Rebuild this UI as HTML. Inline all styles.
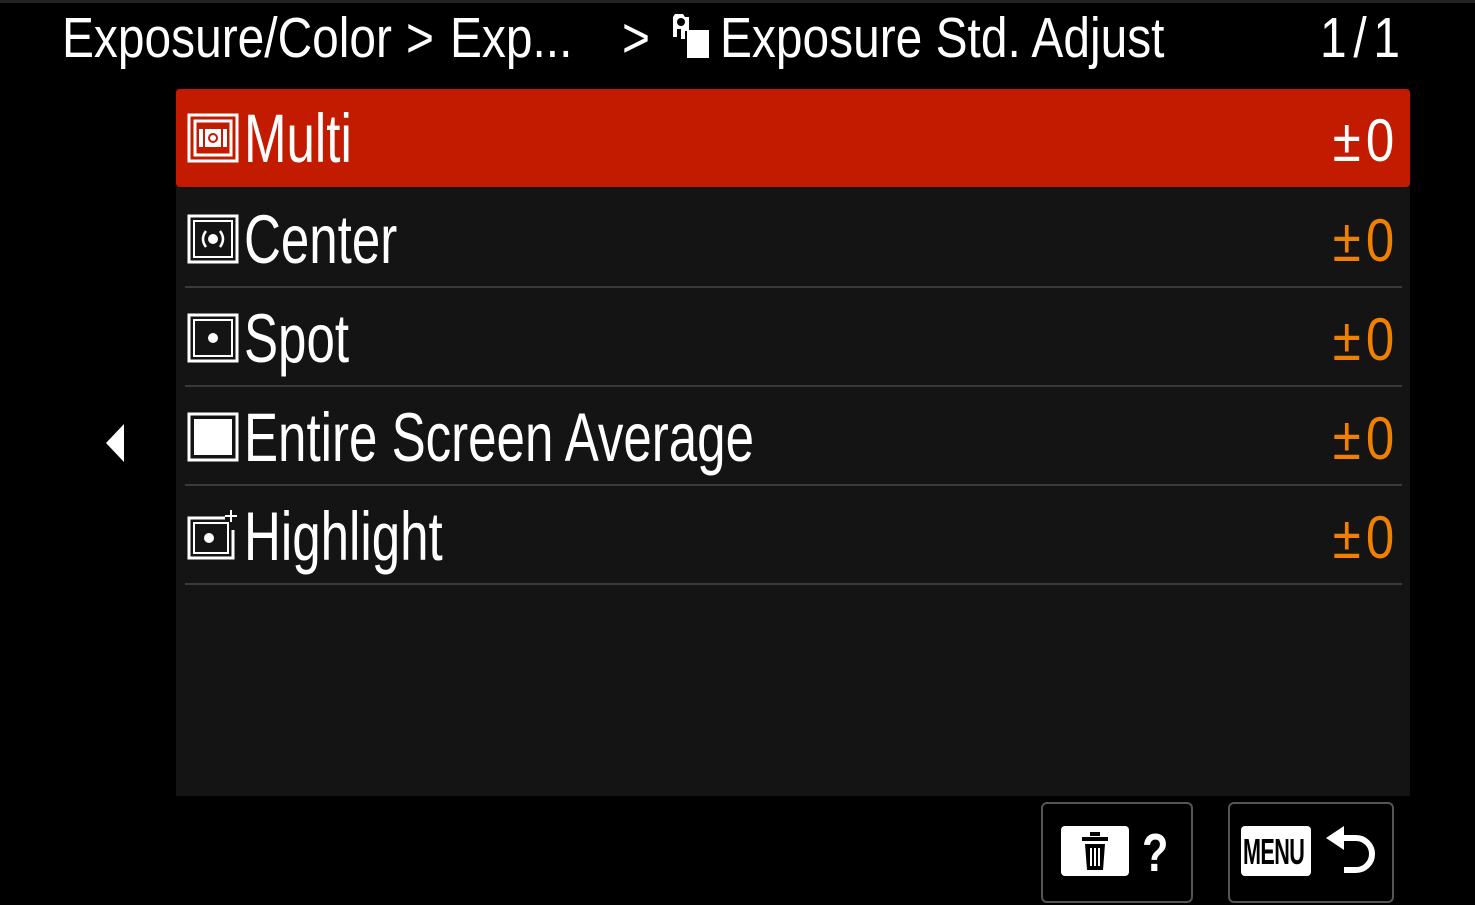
<!DOCTYPE html>
<html><head><meta charset="utf-8"><style>
body{margin:0;width:1475px;height:905px;background:#000;overflow:hidden;font-family:"Liberation Sans",sans-serif;color:#fff;position:relative}
.t{position:absolute;white-space:nowrap;transform-origin:0 0;line-height:1}
.h{font-size:57px;transform:scaleX(0.84)}
.r{font-size:69px;transform:scaleX(0.74)}
.v{position:absolute;right:76px;font-size:60px;color:#f08000;line-height:1;transform-origin:100% 0;transform:scaleX(0.85);letter-spacing:6px}
.sep{position:absolute;left:185px;width:1217px;height:2px;background:#3a3a3a}
.ic{position:absolute;left:187px}
</style></head><body>
<div style="position:absolute;left:0;top:0;width:1475px;height:3px;background:#222"></div>
<div class="t h" style="left:62px;top:10px">Exposure/Color</div>
<div class="t h" style="left:406px;top:10px">&gt;</div>
<div class="t h" style="left:450px;top:10px">Exp...</div>
<div class="t h" style="left:622px;top:10px">&gt;</div>
<svg style="position:absolute;left:669px;top:10px" width="44" height="50" viewBox="0 0 44 50"><path d="M6 4h8l2 3h4v14h-4v8h-4V19h-4v8H4V7z" fill="#fff"/><circle cx="12" cy="12" r="4" fill="#000"/><rect x="18" y="20" width="22" height="28" fill="#fff"/></svg>
<div class="t h" style="left:720px;top:10px">Exposure Std. Adjust</div>
<div class="t h" style="left:1320px;top:10px;letter-spacing:8px">1/1</div>
<div style="position:absolute;left:176px;top:89px;width:1234px;height:707px;background:#141414"></div>
<div style="position:absolute;left:176px;top:89px;width:1234px;height:98px;background:#c21b00;border-radius:4px"></div>
<div class="sep" style="top:286px"></div><div class="sep" style="top:385px"></div><div class="sep" style="top:484px"></div><div class="sep" style="top:583px"></div>
<svg class="ic" style="top:113px" width="52" height="50" viewBox="0 0 52 50"><rect x="2" y="2" width="48" height="46" fill="none" stroke="#fff" stroke-width="3"/><path d="M8 8h36v34H8z" fill="none" stroke="#fff" stroke-width="3"/><rect x="12" y="12" width="28" height="26" fill="#c21b00"/><path d="M12 16h4v18h-4M40 16h-4v18h4" fill="#fff"/><rect x="18" y="16" width="16" height="18" fill="#fff"/><circle cx="26" cy="25" r="5" fill="#c21b00"/><circle cx="26" cy="25" r="3" fill="#fff"/></svg>
<svg class="ic" style="top:214px" width="52" height="50" viewBox="0 0 52 50"><rect x="2" y="2" width="48" height="46" fill="none" stroke="#fff" stroke-width="3"/><rect x="7" y="7" width="38" height="36" fill="none" stroke="#fff" stroke-width="2"/><circle cx="26" cy="25" r="5" fill="#fff"/><path d="M19 17q-6 8 0 16M33 17q6 8 0 16" stroke="#fff" stroke-width="2.5" fill="none"/></svg>
<svg class="ic" style="top:313px" width="52" height="50" viewBox="0 0 52 50"><rect x="2" y="2" width="48" height="46" fill="none" stroke="#fff" stroke-width="3"/><rect x="7" y="7" width="38" height="36" fill="none" stroke="#fff" stroke-width="2"/><circle cx="26" cy="25" r="5" fill="#fff"/></svg>
<svg class="ic" style="top:412px" width="52" height="50" viewBox="0 0 52 50"><rect x="2" y="2" width="48" height="46" fill="none" stroke="#fff" stroke-width="3"/><rect x="7" y="7" width="38" height="36" fill="#fff"/></svg>
<svg class="ic" style="top:508px" width="52" height="52" viewBox="0 0 52 52"><path d="M38 10H2v40h44V22" fill="none" stroke="#fff" stroke-width="3"/><rect x="7" y="15" width="34" height="30" fill="none" stroke="#fff" stroke-width="2"/><circle cx="22" cy="30" r="5" fill="#fff"/><path d="M44 2v12M38 8h12" stroke="#fff" stroke-width="2"/></svg>
<div class="t r" style="left:244px;top:104px">Multi</div>
<div class="t r" style="left:244px;top:205px">Center</div>
<div class="t r" style="left:244px;top:304px">Spot</div>
<div class="t r" style="left:244px;top:403px">Entire Screen Average</div>
<div class="t r" style="left:244px;top:502px">Highlight</div>
<div class="v" style="top:111px;color:#fff">±0</div>
<div class="v" style="top:211px">±0</div>
<div class="v" style="top:310px">±0</div>
<div class="v" style="top:409px">±0</div>
<div class="v" style="top:508px">±0</div>
<svg style="position:absolute;left:102px;top:422px" width="24" height="42"><path d="M22 2L4 21l18 19z" fill="#fff"/></svg>
<div style="position:absolute;left:1041px;top:802px;width:148px;height:97px;border:2px solid #555;border-radius:6px"></div>
<div style="position:absolute;left:1228px;top:802px;width:162px;height:97px;border:2px solid #555;border-radius:6px"></div>
<div style="position:absolute;left:1061px;top:826px;width:68px;height:50px;background:#fff;border-radius:4px"></div>
<svg style="position:absolute;left:1078px;top:830px" width="34" height="44" viewBox="0 0 34 44"><path d="M12 4h10M4 9h26" stroke="#000" stroke-width="4"/><path d="M7 14h20l-2 26H9z" fill="#000"/><path d="M13 18v18M17 18v18M21 18v18" stroke="#fff" stroke-width="2"/></svg>
<div class="t" style="left:1142px;top:826px;font-size:54px;font-weight:bold;transform:scaleX(0.8)">?</div>
<div style="position:absolute;left:1241px;top:826px;width:70px;height:50px;background:#fff;border-radius:4px"></div>
<div class="t" style="left:1243px;top:834px;font-size:36px;font-weight:bold;color:#000;transform:scaleX(0.6);letter-spacing:-1px">MENU</div>
<svg style="position:absolute;left:1324px;top:822px" width="58" height="60" viewBox="0 0 58 60"><path d="M2 16L20 4v24z" fill="#fff"/><path d="M18 16h14a16 16 0 0 1 0 32H20" fill="none" stroke="#fff" stroke-width="6"/></svg>
</body></html>
